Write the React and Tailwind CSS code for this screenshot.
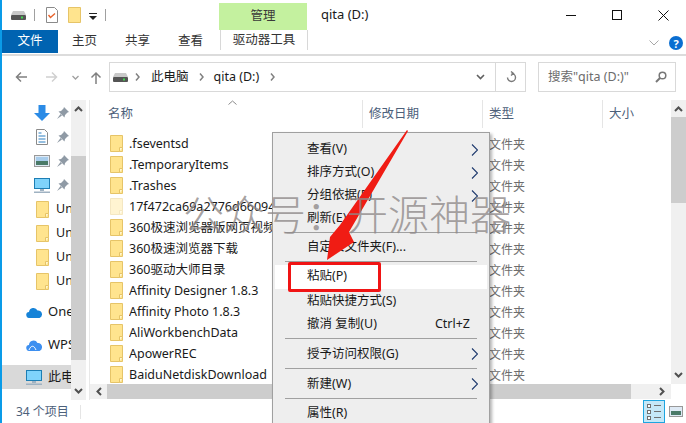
import React from 'react';

const FILES = [
  '.fseventsd', '.TemporaryItems', '.Trashes', '17f472ca69a2776d66094', '360极速浏览器版网页视频', '360极速浏览器下载',
  '360驱动大师目录', 'Affinity Designer 1.8.3', 'Affinity Photo 1.8.3', 'AliWorkbenchData', 'ApowerREC', 'BaiduNetdiskDownload',
];

const Folder = ({ faint }) => (
  <svg width="13" height="17" viewBox="0 0 13 17" className={faint ? 'shrink-0 opacity-40' : 'shrink-0'}>
    <path d="M.5.500h12v16H.5z" fill="#ffe48e" stroke="#e6c468" />
    <path d="M9.500 16.500v-4h3" fill="#fff6cf" stroke="#e6c468" />
  </svg>
);

const Drive = () => (
  <svg width="15" height="9" viewBox="0 0 15 9" className="shrink-0">
    <path d="M2 0h11l2 4H0z" fill="#c9c9c9" />
    <rect y="4" width="15" height="5" rx="1" fill="#555" />
    <rect x="10" y="5.500" width="2" height="2" fill="#43d651" />
  </svg>
);

const Pin = () => (
  <svg width="12" height="12" viewBox="0 0 12 12" className="shrink-0">
    <path d="M7 0l5 5-1.500.5L8 8l-.5 2.500L1.500 4.500 4 4l2.500-2.500z" fill="#8f9aa5" />
    <path d="M3.500 7L0 12l5-3.500z" fill="#8f9aa5" />
  </svg>
);

const Monitor = ({ w = 16 }) => (
  <svg width={w} height="15" viewBox="0 0 16 15" className="shrink-0">
    <rect x=".5" y=".5" width="15" height="10" fill="#7fd3fb" stroke="#1d7eb4" />
    <rect x="6" y="11" width="4" height="2" fill="#9fb2c2" />
    <rect y="13.500" width="16" height="1.500" fill="#9fb2c2" />
  </svg>
);

const Chevron = ({ className = '' }) => (
  <svg width="7" height="12" viewBox="0 0 7 12" className={`shrink-0 ${className}`}>
    <path d="M1 .5L6.500 6 1 11.500" fill="none" stroke="#1f3a6e" strokeWidth="1.100" />
  </svg>
);

const Crumb = () => (
  <svg width="5" height="8" viewBox="0 0 5 8" className="shrink-0">
    <path d="M1 .5L4 4 1 7.500" fill="none" stroke="#808080" strokeWidth="1.500" />
  </svg>
);

const ScrollCaret = ({ dir }) => (
  <svg width="9" height="6" viewBox="0 0 9 6">
    <path d={dir === 'up' ? 'M1 5l3.500-3.500L8 5' : 'M1 1l3.500 3.500L8 1'} fill="none" stroke="#505050" strokeWidth="2" />
  </svg>
);

const SideRow = ({ children, className = '' }) => (
  <div className={`h-6 flex items-center shrink-0 overflow-hidden whitespace-nowrap ${className}`}>{children}</div>
);

const Sep = ({ h }) => (
  <div className={`${h} flex items-center px-[10px]`}>
    <div className="h-px w-full bg-[#a0a0a0]" />
  </div>
);

const MenuRow = ({ label, right, arrow, h = 'h-[23px]', className = '' }) => (
  <div className={`${h} flex items-center pl-[32px] pr-[9px] justify-between pt-[2px] ${className}`}>
    <span>{label}</span>
    {right && <span className="mr-[8px]">{right}</span>}
    {arrow && <Chevron />}
  </div>
);

export default function App() {
  return (
    <div className="relative w-[686px] h-[423px] overflow-hidden bg-white border-l-2 border-[#0a9be8] flex flex-col text-[12.500px] text-[#1a1a1a] [font-family:'Noto_Sans','Noto_Sans_CJK_SC',sans-serif]">
      {/* title bar */}
      <div className="h-[30px] flex items-center shrink-0">
        <div className="ml-[9px]"><Drive /></div>
        <div className="ml-[8px] w-px h-[12px] bg-[#a0a0a0]" />
        <svg width="12" height="16" viewBox="0 0 12 16" className="ml-[11px]">
          <path d="M.5.500h8l3 3v12H.5z" fill="#fff" stroke="#8a8a8a" />
          <path d="M2.500 8l2 2.500 4.500-4" fill="none" stroke="#e8622a" strokeWidth="1.400" />
        </svg>
        <svg width="13" height="16" viewBox="0 0 13 16" className="ml-[10px]">
          <path d="M.5.500h12v15H.5z" fill="#ffe48e" stroke="#e6c468" />
        </svg>
        <svg width="8" height="7" viewBox="0 0 8 7" className="ml-[8px] mt-[3px]">
          <path d="M0 0h8v1H0zM0 3h8L4 7z" fill="#222" />
        </svg>
        <div className="ml-[8px] w-px h-[12px] bg-[#a0a0a0]" />
        <div className="ml-[113px] mt-[3px] w-[88px] h-[27px] bg-[#c4f19f] flex items-center justify-center text-[#3a3a3a]">管理</div>
        <span className="ml-[14px] text-[13px] whitespace-nowrap">qita (D:)</span>
        <div className="ml-auto mr-[17px] flex items-center">
          <svg width="11" height="11" viewBox="0 0 11 11">
            <path d="M0 5.500h10" stroke="#111" strokeWidth="1" />
          </svg>
          <div className="ml-[35px] w-[10px] h-[10px] border border-[#111]" />
          <svg width="11" height="11" viewBox="0 0 11 11" className="ml-[36px]">
            <path d="M.5.500l10 10M10.500.500l-10 10" stroke="#111" strokeWidth="1" />
          </svg>
        </div>
      </div>

      {/* ribbon tabs */}
      <div className="h-[26px] shrink-0 border-b-2 border-[#dcdcdc] flex items-start text-[#333]">
        <div className="w-[56px] h-[23px] bg-[#0063b1] text-white flex items-center justify-center">文件</div>
        <span className="ml-[14px] mt-[2px]">主页</span>
        <span className="ml-[28px] mt-[2px]">共享</span>
        <span className="ml-[28px] mt-[2px]">查看</span>
        <div className="ml-[17px] w-[88px] h-[20px] border-x border-[#d8d8d8] flex items-center justify-center">驱动器工具</div>
        <svg width="10" height="6" viewBox="0 0 10 6" className="ml-[341px] mt-[10px]">
          <path d="M.5.500L5 5 9.500.500" fill="none" stroke="#a8a8a8" />
        </svg>
        <div className="ml-[10px] mt-[6px] w-[14px] h-[14px] rounded-full bg-[#0a6ed1] text-white text-[11px] font-bold flex items-center justify-center leading-none">?</div>
      </div>

      {/* address row */}
      <div className="h-[30px] mt-[6px] shrink-0 flex items-center">
        <svg width="13" height="12" viewBox="0 0 13 12" className="ml-[13px]">
          <path d="M12 6H2M6 1.500L1.500 6 6 10.500" fill="none" stroke="#808080" strokeWidth="1.500" />
        </svg>
        <svg width="13" height="12" viewBox="0 0 13 12" className="ml-[17px]">
          <path d="M1 6h10M7 1.500L11.500 6 7 10.500" fill="none" stroke="#d0d0d0" strokeWidth="1.500" />
        </svg>
        <svg width="7" height="5" viewBox="0 0 7 5" className="ml-[14px]">
          <path d="M.5 1l3 3 3-3" fill="none" stroke="#a0a0a0" strokeWidth="1.300" />
        </svg>
        <svg width="12" height="13" viewBox="0 0 12 13" className="ml-[11px]">
          <path d="M6 13V2M1.500 6.500L6 2l4.500 4.500" fill="none" stroke="#808080" strokeWidth="1.500" />
        </svg>
        <div className="ml-[7px] w-[417px] h-[30px] border border-[#d9d9d9] flex items-center">
          <div className="ml-[3px]"><Drive /></div>
          <div className="ml-[7px]"><Crumb /></div>
          <span className="ml-[11px]">此电脑</span>
          <div className="ml-[10px]"><Crumb /></div>
          <span className="ml-[10px]">qita (D:)</span>
          <div className="ml-[11px]"><Crumb /></div>
          <svg width="9" height="6" viewBox="0 0 9 6" className="ml-[201px]">
            <path d="M1 1l3.500 3.500L8 1" fill="none" stroke="#606060" strokeWidth="1.600" />
          </svg>
          <div className="ml-[10px] w-px h-full bg-[#d9d9d9]" />
          <svg width="11" height="12" viewBox="0 0 11 12" className="ml-[10px]">
            <path d="M5.500 2.500a4 4 0 1 1-4 4M5 .5l2.500 2L5 4.500" fill="none" stroke="#7a7a7a" strokeWidth="1.400" />
          </svg>
        </div>
        <div className="ml-[12px] w-[138px] h-[30px] border border-[#d9d9d9] flex items-center justify-between pl-[9px] pr-[8px] text-[#6d6d6d] whitespace-nowrap">
          <span>搜索"qita (D:)"</span>
          <svg width="12" height="12" viewBox="0 0 12 12">
            <circle cx="7.500" cy="4.500" r="3.300" fill="none" stroke="#777" strokeWidth="1.500" />
            <path d="M5 7l-4 4" stroke="#777" strokeWidth="2" />
          </svg>
        </div>
      </div>

      {/* main area */}
      <div className="h-[300px] mt-[8px] shrink-0 flex">
        {/* nav pane */}
        <div className="w-[69px] shrink-0 flex flex-col pt-px overflow-hidden">
          <SideRow>
            <svg width="16" height="16" viewBox="0 0 16 16" className="ml-[32px] shrink-0"><path d="M4.500 0h7v8H16l-8 8-8-8h4.500z" fill="#2b8be6" /></svg>
            <div className="ml-[7px]"><Pin /></div>
          </SideRow>
          <SideRow>
            <svg width="12" height="16" viewBox="0 0 12 16" className="ml-[34px] mr-[2px] shrink-0">
              <path d="M.5.500h8l3 3v12H.5z" fill="#fff" stroke="#8a8a8a" />
              <path d="M2.500 4h3M2.500 7h7M2.500 10h7M2.500 13h7" stroke="#2a7fc1" />
            </svg>
            <div className="ml-[7px]"><Pin /></div>
          </SideRow>
          <SideRow>
            <svg width="16" height="12" viewBox="0 0 16 12" className="ml-[32px] shrink-0">
              <rect x=".5" y=".5" width="15" height="11" fill="#dfeaf5" stroke="#999" />
              <path d="M2 6h12v4H2z" fill="#4a7a68" />
              <path d="M2 2h12v4H2z" fill="#a8cdec" />
            </svg>
            <div className="ml-[7px]"><Pin /></div>
          </SideRow>
          <SideRow>
            <div className="ml-[32px]"><Monitor /></div>
            <div className="ml-[7px]"><Pin /></div>
          </SideRow>
          {[0, 1, 2, 3].map((i) => (
            <SideRow key={i}>
              <div className="ml-[34px]"><Folder /></div>
              <span className="ml-[7px]">Un</span>
            </SideRow>
          ))}
          <SideRow className="mt-[7px]">
            <svg width="16" height="11" viewBox="0 0 16 11" className="ml-[24px] shrink-0">
              <path d="M3.500 11a3 3 0 0 1-.5-6 4.500 4.500 0 0 1 8.500-1.500A3.800 3.800 0 0 1 16 7a4 4 0 0 1-2.500 4z" fill="#1683d8" />
            </svg>
            <span className="ml-[6px] text-[13px]">OneDrive</span>
          </SideRow>
          <SideRow className="mt-[9px]">
            <svg width="16" height="12" viewBox="0 0 16 12" className="ml-[24px] shrink-0">
              <path d="M3.500 12a3 3 0 0 1-.5-6 4.500 4.500 0 0 1 8.500-2A3.800 3.800 0 0 1 16 8a4 4 0 0 1-2.500 4z" fill="#3d8ff0" />
              <path d="M3 11c2-5 5-5 7 0" fill="none" stroke="#fff" />
            </svg>
            <span className="ml-[6px] text-[13px]">WPS网盘</span>
          </SideRow>
          <SideRow className="mt-[8px] bg-[#d9d9d9]">
            <div className="ml-[24px]"><Monitor /></div>
            <span className="ml-[6px] text-[13px]">此电脑</span>
          </SideRow>
        </div>

        {/* nav scrollbar */}
        <div className="w-[15px] shrink-0 bg-[#f0f0f0] flex flex-col items-center">
          <div className="h-[56px] pt-[6px] w-full flex justify-center"><ScrollCaret dir="up" /></div>
          <div className="h-[204px] w-full bg-[#cdcdcd]" />
          <div className="flex-1 w-full flex items-end justify-center pb-[6px]"><ScrollCaret dir="down" /></div>
        </div>
        <div className="w-[4px] shrink-0 border-r border-[#e8e8e8]" />

        {/* file list */}
        <div className="flex-1 min-w-0 flex flex-col">
          <div className="flex-1 min-h-0 flex">
            <div className="flex-1 min-w-0 flex flex-col overflow-hidden">
              <div className="h-[28px] shrink-0 flex text-[#4c607a] relative">
                <span className="w-[273px] pl-[18px] pt-[5px] border-r border-[#e5e5e5]">名称</span>
                <span className="w-[120px] pl-[6px] pt-[5px] border-r border-[#e5e5e5]">修改日期</span>
                <span className="w-[120px] pl-[6px] pt-[5px] border-r border-[#e5e5e5]">类型</span>
                <span className="pl-[6px] pt-[5px]">大小</span>
                <svg width="9" height="5" viewBox="0 0 9 5" className="absolute left-[138px] top-0">
                  <path d="M.5 4.500L4.500 1l4 3.500" fill="none" stroke="#8a8a8a" />
                </svg>
              </div>
              <div className="mt-[5px] flex flex-col">
                {FILES.map((name, i) => (
                  <div key={name} className="h-[21px] shrink-0 flex items-center whitespace-nowrap pt-[2px]">
                    <div className="ml-[20px] -mt-[2px]"><Folder faint={i === 3} /></div>
                    <span className="ml-[6px] w-[360px] overflow-hidden">{name}</span>
                    <span className="text-[#6d6d6d] text-[12px]">文件夹</span>
                  </div>
                ))}
              </div>
            </div>
            <div className="w-[15px] shrink-0 bg-[#f0f0f0] flex flex-col">
              <div className="h-[17px] flex justify-center pt-[6px]"><ScrollCaret dir="up" /></div>
              <div className="h-[86px] bg-[#cdcdcd]" />
              <div className="flex-1 flex items-end justify-center pb-[6px]"><ScrollCaret dir="down" /></div>
            </div>
          </div>
          {/* horizontal scrollbar */}
          <div className="h-[15px] mb-px shrink-0 flex bg-[#f0f0f0] mr-[15px]">
            <div className="w-[17px] flex items-center justify-center">
              <svg width="6" height="9" viewBox="0 0 6 9"><path d="M5 1L1.500 4.500 5 8" fill="none" stroke="#505050" strokeWidth="2" /></svg>
            </div>
            <div className="w-[524px] bg-[#cdcdcd]" />
            <div className="flex-1 flex items-center justify-end pr-[6px]">
              <svg width="6" height="9" viewBox="0 0 6 9"><path d="M1 1l3.500 3.500L1 8" fill="none" stroke="#505050" strokeWidth="2" /></svg>
            </div>
          </div>
        </div>
      </div>

      {/* status bar */}
      <div className="flex-1 flex items-center text-[#4c607a] text-[12px]">
        <span className="ml-[14px] w-[64px]">34 个项目</span>
        <div className="w-px h-[14px] bg-[#e5e5e5]" />
        <div className="ml-auto mr-[2px] flex items-center gap-[3px]">
          <div className="w-[22px] h-[23px] bg-[#c4e8f8] border border-[#1ea5e0] flex flex-col justify-center gap-[2px] px-[3px]">
            {[0, 1, 2].map((i) => (
              <div key={i} className="flex items-center gap-[3px]">
                <div className="w-[4px] h-[4px] border border-[#707070] bg-white" />
                <div className="flex-1 h-px bg-[#707070]" />
              </div>
            ))}
          </div>
          <svg width="14" height="11" viewBox="0 0 14 11" className="mx-[1px]">
            <rect x=".5" y=".5" width="13" height="10" fill="#dfeaf5" stroke="#999" />
            <path d="M2 5h10v4H2z" fill="#4a7a68" />
          </svg>
        </div>
      </div>

      {/* context menu */}
      <div className="absolute left-[270px] top-[132px] w-[218px] h-[300px] bg-[#eeeeee] border border-[#a0a0a0] pt-[4px] px-[2px] text-[12.500px] text-[#1a1a1a] shadow-[2px_2px_3px_rgba(0,0,0,0.3)]">
        <MenuRow label="查看(V)" arrow />
        <MenuRow label="排序方式(O)" arrow />
        <MenuRow label="分组依据(P)" arrow />
        <MenuRow label="刷新(E)" />
        <Sep h="h-[6px]" />
        <MenuRow label="自定义文件夹(F)..." h="h-[23px]" />
        <Sep h="h-[7px]" />
        <MenuRow label="粘贴(P)" h="h-[24px]" className="bg-white pb-[4px]" />
        <MenuRow label="粘贴快捷方式(S)" />
        <MenuRow label="撤消 复制(U)" right="Ctrl+Z" />
        <Sep h="h-[6px]" />
        <MenuRow label="授予访问权限(G)" arrow h="h-[24px]" />
        <Sep h="h-[6px]" />
        <MenuRow label="新建(W)" arrow h="h-[24px]" />
        <Sep h="h-[6px]" />
        <MenuRow label="属性(R)" />
      </div>

      {/* annotation: red highlight box */}
      <div className="absolute left-[286px] top-[262px] w-[93px] h-[30px] border-[3px] border-[#f01414] rounded-[2px]" />

      {/* annotation: red arrow */}
      <svg width="90" height="135" viewBox="0 0 90 135" className="absolute left-[322px] top-[128px]">
        <path d="M83 2 L16 97 L6 109 L3 132 L30 114 L25 104 L84 3 Z" fill="#f01c14" />
      </svg>

      {/* watermark */}
      <div className="absolute left-[181px] top-[189px] text-[41px] leading-[50px] text-[#8f8989]/80 whitespace-nowrap font-light">公众号：开源神器</div>
    </div>
  );
}
